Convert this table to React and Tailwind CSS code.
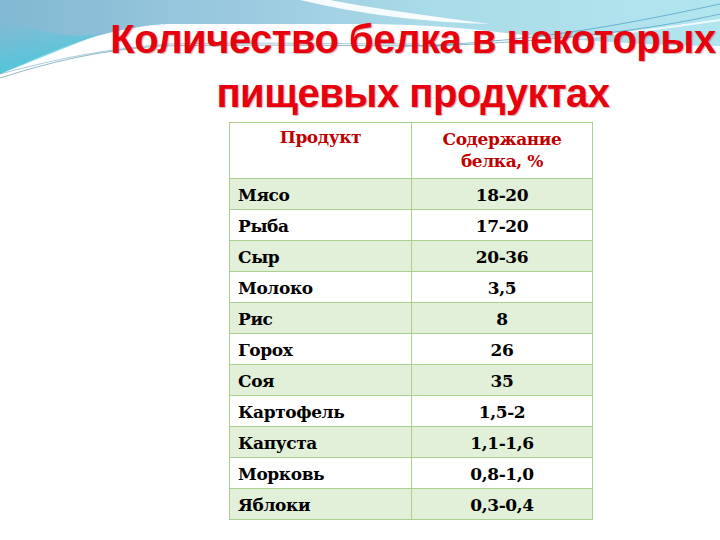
const rows = [
  ['Мясо', '18-20'],
  ['Рыба', '17-20'],
  ['Сыр', '20-36'],
  ['Молоко', '3,5'],
  ['Рис', '8'],
  ['Горох', '26'],
  ['Соя', '35'],
  ['Картофель', '1,5-2'],
  ['Капуста', '1,1-1,6'],
  ['Морковь', '0,8-1,0'],
  ['Яблоки', '0,3-0,4'],
];

const serif = { fontFamily: '"DejaVu Serif", "Liberation Serif", serif' };

function Waves() {
  return (
    <svg className="absolute left-0 top-0" width="720" height="150" viewBox="0 0 720 150">
      <defs>
        <linearGradient id="sky" x1="0" y1="0" x2="1" y2="0">
          <stop offset="0" stopColor="#82b8d2" />
          <stop offset="0.35" stopColor="#9ccbe0" />
          <stop offset="0.6" stopColor="#aadbe8" />
          <stop offset="1" stopColor="#b2e6ef" />
        </linearGradient>
        <linearGradient id="teal" x1="0" y1="0" x2="0.4" y2="1">
          <stop offset="0" stopColor="#5cc8dc" stopOpacity="0" />
          <stop offset="1" stopColor="#45c6da" stopOpacity="1" />
        </linearGradient>
        <linearGradient id="fade" x1="0" y1="0" x2="0" y2="1">
          <stop offset="0" stopColor="#ffffff" stopOpacity="0.9" />
          <stop offset="1" stopColor="#ffffff" stopOpacity="0" />
        </linearGradient>
      </defs>
      <path d="M0 0 H720 V46 C650 46 560 40 480 30 C420 24 380 24 330 24 L170 24 C115 26 60 46 0 74 Z" fill="url(#sky)" />
      <path d="M0 20 C40 30 70 40 100 34 C60 50 30 62 0 74 Z" fill="url(#teal)" />
      <path d="M300 0 C360 14 420 22 490 24 C430 16 370 8 330 0 Z" fill="#ffffff" opacity="0.9" />
      <path d="M330 24 C400 26 450 30 480 32 C560 42 650 48 720 48 V62 C640 60 560 52 480 44 C420 38 380 34 330 34 Z" fill="url(#fade)" />
      <path d="M0 78 C50 62 100 50 160 46 C260 44 360 46 440 46" stroke="#3f7f9a" strokeWidth="1" fill="none" opacity="0.55" />
      <path d="M0 74 C60 58 110 48 170 44 C260 42 340 44 420 44" stroke="#6aaec4" strokeWidth="1" fill="none" opacity="0.6" />
      <path d="M400 46 C520 44 620 26 720 4" stroke="#5aa6cc" strokeWidth="1.2" fill="none" opacity="0.8" />
      <path d="M430 46 C550 42 650 30 720 14" stroke="#3f8fc0" strokeWidth="1" fill="none" opacity="0.6" />
      <path d="M560 40 C620 34 680 26 720 20" stroke="#ffffff" strokeWidth="2" fill="none" opacity="0.8" />
    </svg>
  );
}

export default function App() {
  return (
    <div className="relative w-[720px] h-[540px] overflow-hidden bg-white">
      <Waves />
      <div className="relative">
        <div
          className="pl-[106px] pt-[12px] flex flex-col items-center text-[#e8000e] font-bold whitespace-nowrap text-[40px] leading-[54px] tracking-[-0.5px]"
          style={{ fontFamily: '"Liberation Sans", Arial, sans-serif', textShadow: '1px 1px 1px rgba(90,0,0,0.3)' }}
        >
          <div>Количество белка в некоторых</div>
          <div>пищевых продуктах</div>
        </div>

        <table className="ml-[229px] mt-[2px] w-[364px] border-collapse text-[17px] font-bold tracking-[-0.4px]" style={serif}>
          <thead>
            <tr className="h-[56px] bg-white">
              <th className="w-[182px] border border-[#a9d08e] align-top pt-[3px] font-bold text-[#c00000] leading-[22px]">Продукт</th>
              <th className="border border-[#a9d08e] align-top pt-[5px] font-bold text-[#c00000] leading-[22px]">
                Содержание<br />белка, %
              </th>
            </tr>
          </thead>
          <tbody>
            {rows.map(([name, value], i) => (
              <tr key={name} className={i % 2 === 0 ? 'h-[31px] bg-[#e2efd9]' : 'h-[31px] bg-white'}>
                <td className="border border-[#a9d08e] pl-[8px] pt-[2px] text-black leading-none">{name}</td>
                <td className="border border-[#a9d08e] pt-[2px] text-center text-black leading-none">{value}</td>
              </tr>
            ))}
          </tbody>
        </table>
      </div>
    </div>
  );
}
